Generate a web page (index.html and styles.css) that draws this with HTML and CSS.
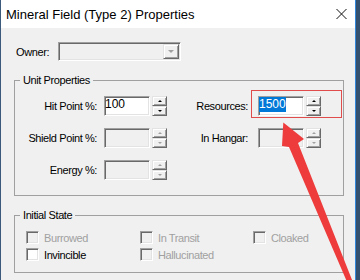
FILE: index.html
```html
<!DOCTYPE html>
<html lang="en">
<head>
  <meta charset="UTF-8" />
  <title>Mineral Field (Type 2) Properties</title>
  <link rel="stylesheet" href="styles.css">
</head>
<body>
  <div class="window">
    <div class="titlebar">
      <span class="title">Mineral Field (Type 2) Properties</span>
      <svg class="close" width="11" height="10" viewBox="0 0 11 10">
        <path d="M0.5 0 L10.5 10 M10.5 0 L0.5 10" stroke="#111" stroke-width="1" fill="none"/>
      </svg>
    </div>

    <div class="client">
      <div class="owner-row">
        <label class="owner-label">Owner:</label>
        <div class="combo sunken">
          <span class="combo-btn raised"><i class="tri down big grey"></i></span>
        </div>
      </div>

      <fieldset class="group unit">
        <legend>Unit Properties</legend>
        <div class="field-grid">
          <div class="field">
            <label>Hit Point %:</label>
            <div class="edit sunken">100</div>
            <div class="spin">
              <span class="spin-btn raised"><i class="tri up"></i></span>
              <span class="spin-btn raised"><i class="tri down"></i></span>
            </div>
          </div>
          <div class="field right">
            <label>Resources:</label>
            <div class="edit sunken"><span class="sel">1500</span></div>
            <div class="spin">
              <span class="spin-btn raised"><i class="tri up"></i></span>
              <span class="spin-btn raised"><i class="tri down"></i></span>
            </div>
          </div>
          <div class="field">
            <label>Shield Point %:</label>
            <div class="edit sunken disabled"></div>
            <div class="spin">
              <span class="spin-btn raised"><i class="tri up grey"></i></span>
              <span class="spin-btn raised"><i class="tri down grey"></i></span>
            </div>
          </div>
          <div class="field right">
            <label>In Hangar:</label>
            <div class="edit sunken disabled"></div>
            <div class="spin">
              <span class="spin-btn raised"><i class="tri up grey"></i></span>
              <span class="spin-btn raised"><i class="tri down grey"></i></span>
            </div>
          </div>
          <div class="field">
            <label>Energy %:</label>
            <div class="edit sunken disabled"></div>
            <div class="spin">
              <span class="spin-btn raised"><i class="tri up grey"></i></span>
              <span class="spin-btn raised"><i class="tri down grey"></i></span>
            </div>
          </div>
        </div>
      </fieldset>

      <fieldset class="group state">
        <legend>Initial State</legend>
        <div class="checks">
          <div class="check disabled"><span class="box sunken"></span>Burrowed</div>
          <div class="check disabled"><span class="box sunken"></span>In Transit</div>
          <div class="check disabled"><span class="box sunken"></span>Cloaked</div>
          <div class="check"><span class="box sunken on"></span>Invincible</div>
          <div class="check disabled"><span class="box sunken"></span>Hallucinated</div>
        </div>
      </fieldset>
    </div>

    <!-- annotation drawn over the dialog -->
    <svg class="annot" width="360" height="280" viewBox="0 0 360 280">
      <rect x="251.5" y="90.5" width="90" height="27" fill="none" stroke="#e04b4b" stroke-width="1"/>
      <polygon points="283.3,122.5 304,139 298,143 356,290 350.5,290 289,147 282,146" fill="#ee3b3b"/>
    </svg>
  </div>
</body>
</html>
```

FILE: styles.css
```css
html, body {
  overflow: hidden;
}

body {
  margin: 0;
  background: #33506f;
  font-family: "Liberation Sans", Arial, sans-serif;
}

.window {
  position: relative;
  width: 354px;
  height: 280px;
  border-left: 1px solid #3b5a7c;
  border-right: 1px solid #3087dc;
  background: #f0f0f0;
  overflow: hidden;
}

.titlebar {
  height: 28px;
  background: #fff;
  display: flex;
  align-items: center;
  justify-content: space-between;
  padding-left: 5px;
}

.title {
  font-size: 13px;
  color: #000;
}

.close {
  margin-right: 8px;
}

.client {
  padding: 14px 0 0 13px;
  font-size: 11px;
  letter-spacing: -0.4px;
  color: #000;
}

/* 3D borders */
.sunken {
  box-sizing: border-box;
  border: 1px solid;
  border-color: #a0a0a0 #fff #fff #a0a0a0;
  box-shadow: inset 1px 1px 0 #696969, inset -1px -1px 0 #e3e3e3;
}

.raised {
  box-sizing: border-box;
  border: 1px solid;
  border-color: #e3e3e3 #696969 #696969 #e3e3e3;
  box-shadow: inset 1px 1px 0 #fff, inset -1px -1px 0 #a0a0a0;
  background: #f0f0f0;
}

.tri {
  width: 0;
  height: 0;
  border-left: 2px solid transparent;
  border-right: 2px solid transparent;
  color: #000;
}

.tri.up {
  border-bottom: 2px solid currentColor;
}

.tri.down {
  border-top: 2px solid currentColor;
}

.tri.big {
  border-left-width: 3px;
  border-right-width: 3px;
  border-top-width: 3px;
}

.tri.grey {
  color: #a0a0a0;
}

/* owner */
.owner-row {
  display: flex;
  align-items: center;
  height: 19px;
}

.owner-label {
  width: 44px;
  padding-left: 2px;
  box-sizing: border-box;
}

.combo {
  width: 123px;
  height: 19px;
  display: flex;
  justify-content: flex-end;
  align-items: center;
  padding-right: 1px;
  background: #f0f0f0;
}

.combo-btn {
  width: 16px;
  height: 15px;
  display: flex;
  align-items: center;
  justify-content: center;
}

/* group boxes */
.group {
  margin: 13px 0 0 0;
  width: 330px;
  min-width: 0;
  box-sizing: border-box;
  border: 1px solid #a0a0a0;
  padding: 9px 0 15px 0;
}

.group legend {
  margin-left: 5px;
  padding: 0 3px;
  line-height: 13px;
}

.field-grid {
  display: grid;
  grid-template-columns: 152px 154px;
  row-gap: 12px;
}

.field {
  display: flex;
  align-items: center;
}

.field label {
  width: 82px;
  margin-right: 7px;
  text-align: right;
  white-space: nowrap;
}

.field.right label {
  width: 81px;
  margin-right: 10px;
}

.edit {
  width: 46px;
  height: 20px;
  background: #fff;
  font-size: 12px;
  letter-spacing: 0;
  line-height: 15px;
  padding-left: 0;
}

.edit.disabled {
  background: #f0f0f0;
}

.sel {
  display: inline-block;
  background: #0078d7;
  color: #fff;
}

.spin {
  width: 15px;
  height: 20px;
  margin-left: 2px;
  display: flex;
  flex-direction: column;
}

.spin-btn {
  flex: 1;
  display: flex;
  align-items: center;
  justify-content: center;
}

/* checkboxes */
.group.state {
  padding: 8px 0 10px 0;
}

.checks {
  display: grid;
  grid-template-columns: 114px 113px auto;
  row-gap: 2px;
  padding-left: 11px;
}

.check {
  display: flex;
  align-items: center;
  height: 15px;
  white-space: nowrap;
}

.check.disabled {
  color: #a0a0a0;
}

.box {
  width: 13px;
  height: 13px;
  margin-right: 5px;
  background: #f0f0f0;
}

.box.on {
  background: #fff;
}

.annot {
  position: absolute;
  left: -1px;
  top: 0;
  pointer-events: none;
}
```
